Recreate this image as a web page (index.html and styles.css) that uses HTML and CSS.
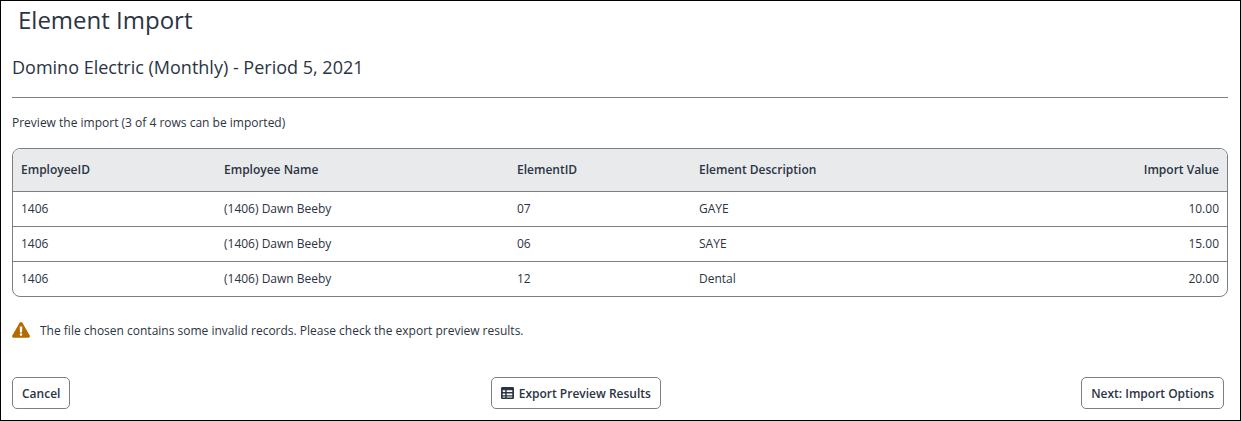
FILE: index.html
```html
<!DOCTYPE html>
<html lang="en">
<head>
    <meta charset="UTF-8">
    <title>Element Import</title>
    <link rel="stylesheet" href="styles.css">
</head>
<body>
    <div class="page">
        <h1 class="title">Element Import</h1>
        <h2 class="subtitle">Domino Electric (Monthly) - Period 5, 2021</h2>
        <hr class="divider">
        <p class="intro">Preview the import (3 of 4 rows can be imported)</p>

        <div class="table-wrap">
            <table class="preview">
                <thead>
                    <tr>
                        <th class="col-id">EmployeeID</th>
                        <th class="col-name">Employee Name</th>
                        <th class="col-element">ElementID</th>
                        <th>Element Description</th>
                        <th class="num">Import Value</th>
                    </tr>
                </thead>
                <tbody>
                    <tr>
                        <td>1406</td>
                        <td>(1406) Dawn Beeby</td>
                        <td>07</td>
                        <td>GAYE</td>
                        <td class="num">10.00</td>
                    </tr>
                    <tr>
                        <td>1406</td>
                        <td>(1406) Dawn Beeby</td>
                        <td>06</td>
                        <td>SAYE</td>
                        <td class="num">15.00</td>
                    </tr>
                    <tr>
                        <td>1406</td>
                        <td>(1406) Dawn Beeby</td>
                        <td>12</td>
                        <td>Dental</td>
                        <td class="num">20.00</td>
                    </tr>
                </tbody>
            </table>
        </div>

        <div class="warning">
            <svg class="warning-icon" width="18" height="16" viewBox="0 0 18 16">
                <path fill="#b56a00" fill-rule="evenodd" d="M9 0c.6 0 1.100.3 1.400.8l7.300 12.700c.6 1-.2 2.300-1.400 2.300H1.700c-1.200 0-2-1.300-1.400-2.300L7.600.8C7.900.3 8.400 0 9 0zM7.700 4.600l.3 6h2l.3-6zM9 11.200c-.8 0-1.300.6-1.300 1.300s.5 1.300 1.300 1.300 1.300-.6 1.300-1.300-.5-1.300-1.300-1.300z"/>
            </svg>
            <span class="warning-text">The file chosen contains some invalid records. Please check the export preview results.</span>
        </div>

        <div class="actions">
            <button class="btn">Cancel</button>
            <button class="btn">
                <svg class="btn-icon" width="13" height="12" viewBox="0 0 13 12">
                    <path fill="#2b3443" fill-rule="evenodd" d="M1.300 0h10.400c.7 0 1.300.6 1.300 1.300v9.400c0 .7-.6 1.300-1.300 1.300H1.300C.6 12 0 11.400 0 10.700V1.300C0 .6.600 0 1.300 0zM1.700 3.200v1.900h2.500V3.200zm4 0v1.900h5.600V3.200zm-4 3.300v1.700h2.500V6.500zm4 0v1.700h5.600V6.500zm-4 3v1h2.500v-1zm4 0v1h5.600v-1z"/>
                </svg>
                Export Preview Results
            </button>
            <button class="btn">Next: Import Options</button>
        </div>
    </div>
</body>
</html>
```

FILE: styles.css
```css
* {
    box-sizing: border-box;
}
body {
    margin: 0;
    background: white;
    font-family: "Open Sans", sans-serif;
    color: #2b3443;
}
.page {
    height: 421px;
    padding: 0 12px 0 11px;
    border: 1px solid #000;
    display: flex;
    flex-direction: column;
}
.title {
    margin: 2px 0 0 6px;
    font-size: 24px;
    line-height: 34px;
    font-weight: 400;
}
.subtitle {
    margin: 17px 0 0;
    font-size: 18px;
    line-height: 26px;
    font-weight: 400;
}
.divider {
    width: 100%;
    margin: 17px 0 0;
    border: none;
    border-top: 1px solid #7b7f86;
}
.intro {
    margin: 17px 0 0;
    font-size: 12px;
    line-height: 16px;
}
.table-wrap {
    margin-top: 17px;
    border: 1px solid #7b7f86;
    border-radius: 8px;
    overflow: hidden;
}
.preview {
    width: 100%;
    border-collapse: collapse;
    table-layout: fixed;
    font-size: 12px;
}
.preview th {
    height: 42px;
    padding: 0 8px;
    background: #e9eaec;
    border-bottom: 1px solid #7b7f86;
    text-align: left;
    font-weight: 600;
}
.preview td {
    height: 35px;
    padding: 0 8px;
    border-top: 1px solid #7b7f86;
}
.preview tbody tr:first-child td {
    border-top: none;
}
.preview .num {
    text-align: right;
}
.col-id {
    width: 203px;
}
.col-name {
    width: 293px;
}
.col-element {
    width: 182px;
}
.warning {
    margin-top: 23px;
    display: flex;
    align-items: center;
    gap: 10px;
    font-size: 12px;
    line-height: 18px;
}
.warning-icon {
    flex: none;
}
.warning-text {
    margin-top: 2px;
}
.actions {
    margin: 37px 4px 0 0;
    display: flex;
    justify-content: space-between;
}
.btn {
    height: 32px;
    padding: 0 9px;
    background: white;
    border: 1px solid #7b7f86;
    border-radius: 5px;
    font-family: inherit;
    font-size: 12px;
    font-weight: 600;
    color: #2b3443;
    display: flex;
    align-items: center;
    gap: 2px;
}
.btn-icon {
    margin-right: 3px;
}
```
